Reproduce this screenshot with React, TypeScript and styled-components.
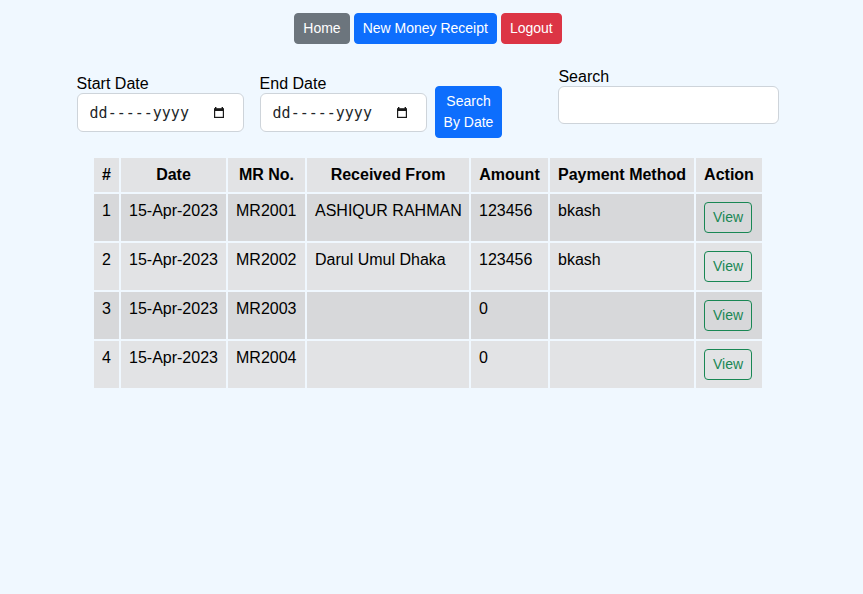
import React from "react";
import styled, { createGlobalStyle } from "styled-components";

const GlobalStyle = createGlobalStyle`
  html, body {
    margin: 0;
    padding: 0;
    background: #f0f8ff;
    font-family: "Liberation Sans", Arial, sans-serif;
    font-size: 16px;
    line-height: 1.5;
    color: #212529;
  }
  * { box-sizing: border-box; }
`;

const Page = styled.div`
  width: 856px;
  padding-top: 13px;
`;

const Nav = styled.nav`
  display: flex;
  justify-content: center;
  gap: 4px;
`;

const Btn = styled.button<{ $variant: "secondary" | "primary" | "danger" }>`
  font-family: "Liberation Sans", Arial, sans-serif;
  font-size: 14px;
  line-height: 21px;
  padding: 4px 8px;
  border-radius: 4px;
  color: #fff;
  cursor: pointer;
  flex-shrink: 0;
  border: 1px solid
    ${(p) =>
      p.$variant === "secondary" ? "#6c757d" : p.$variant === "primary" ? "#0d6efd" : "#dc3545"};
  background: ${(p) =>
    p.$variant === "secondary" ? "#6c757d" : p.$variant === "primary" ? "#0d6efd" : "#dc3545"};
`;

const FilterRow = styled.div`
  margin-top: 18px;
  display: flex;
  justify-content: center;
  align-items: flex-start;
`;

const Field = styled.div<{ $top: number; $gapRight: number }>`
  display: flex;
  flex-direction: column;
  flex-shrink: 0;
  margin-top: ${(p) => p.$top}px;
  margin-right: ${(p) => p.$gapRight}px;
`;

const Label = styled.label`
  font-size: 16px;
  line-height: 18px;
  padding-top: 6px;
  color: #000;
`;

const DateBox = styled.div`
  position: relative;
  width: 167px;
  height: 39px;
`;

const DateInput = styled.input`
  width: 100%;
  height: 100%;
  padding: 6px 12px;
  border: 1px solid #ced4da;
  border-radius: 6px;
  background: #fff;
  font-family: "DejaVu Sans Mono", monospace;
  font-size: 15px;
  color: #212529;
  &::placeholder {
    color: #212529;
    opacity: 1;
  }
`;

const CalendarIcon = styled.svg`
  position: absolute;
  left: 137px;
  top: 14px;
  pointer-events: none;
`;

const TextInput = styled.input`
  width: 221px;
  height: 38px;
  padding: 6px 12px;
  border: 1px solid #ced4da;
  border-radius: 6px;
  background: #fff;
  font-family: "Liberation Sans", Arial, sans-serif;
  font-size: 16px;
`;

const SearchBtn = styled(Btn)`
  margin-top: 24px;
  margin-right: 56px;
  text-align: center;
  white-space: nowrap;
`;

const Table = styled.table`
  width: 672px;
  margin: 18px auto 0;
  border-collapse: separate;
  border-spacing: 2px;
  table-layout: fixed;
  color: #000;
`;

const Th = styled.th`
  background: #e2e3e5;
  font-weight: bold;
  font-size: 16px;
  line-height: 18px;
  padding: 8px;
  text-align: center;
  white-space: nowrap;
`;

const Tr = styled.tr<{ $odd: boolean }>`
  background: ${(p) => (p.$odd ? "#d7d8da" : "#e2e3e5")};
`;

const Td = styled.td`
  font-size: 16px;
  line-height: 18px;
  padding: 8px;
  vertical-align: top;
  white-space: nowrap;
`;

const ViewBtn = styled.button`
  font-family: "Liberation Sans", Arial, sans-serif;
  font-size: 14px;
  line-height: 21px;
  padding: 4px 8px;
  border: 1px solid #198754;
  border-radius: 4px;
  background: transparent;
  color: #198754;
  cursor: pointer;
`;

const rows = [
  { id: 1, date: "15-Apr-2023", mr: "MR2001", from: "ASHIQUR RAHMAN", amount: "123456", method: "bkash" },
  { id: 2, date: "15-Apr-2023", mr: "MR2002", from: "Darul Umul Dhaka", amount: "123456", method: "bkash" },
  { id: 3, date: "15-Apr-2023", mr: "MR2003", from: "", amount: "0", method: "" },
  { id: 4, date: "15-Apr-2023", mr: "MR2004", from: "", amount: "0", method: "" },
];

const widths = [25, 105, 77, 162, 77, 144, 66];

function DateField({ id, label, gap }: { id: string; label: string; gap: number }) {
  return (
    <Field $top={7} $gapRight={gap}>
      <Label htmlFor={id}>{label}</Label>
      <DateBox>
        <DateInput id={id} type="text" placeholder="dd-----yyyy" />
        <CalendarIcon width="10" height="11" viewBox="0 0 10 11">
          <rect x="1" y="0" width="1.4" height="2" fill="#1a1a1a" />
          <rect x="7.6" y="0" width="1.4" height="2" fill="#1a1a1a" />
          <rect x="0" y="1.5" width="10" height="2.5" fill="#1a1a1a" />
          <rect x="0.6" y="2" width="8.8" height="8.4" fill="none" stroke="#1a1a1a" strokeWidth="1.2" />
        </CalendarIcon>
      </DateBox>
    </Field>
  );
}

export default function App() {
  return (
    <Page>
      <GlobalStyle />
      <Nav>
        <Btn $variant="secondary">Home</Btn>
        <Btn $variant="primary">New Money Receipt</Btn>
        <Btn $variant="danger">Logout</Btn>
      </Nav>
      <FilterRow>
        <DateField id="start" label="Start Date" gap={16} />
        <DateField id="end" label="End Date" gap={8} />
        <SearchBtn $variant="primary">
          Search
          <br />
          By Date
        </SearchBtn>
        <Field $top={0} $gapRight={0}>
          <Label htmlFor="search">Search</Label>
          <TextInput id="search" type="text" />
        </Field>
      </FilterRow>
      <Table>
        <colgroup>
          {widths.map((w, i) => (
            <col key={i} style={{ width: w }} />
          ))}
        </colgroup>
        <thead>
          <tr>
            <Th>#</Th>
            <Th>Date</Th>
            <Th>MR No.</Th>
            <Th>Received From</Th>
            <Th>Amount</Th>
            <Th>Payment Method</Th>
            <Th>Action</Th>
          </tr>
        </thead>
        <tbody>
          {rows.map((r, i) => (
            <Tr key={r.id} $odd={i % 2 === 0}>
              <Td>{r.id}</Td>
              <Td>{r.date}</Td>
              <Td>{r.mr}</Td>
              <Td>{r.from}</Td>
              <Td>{r.amount}</Td>
              <Td>{r.method}</Td>
              <Td>
                <ViewBtn>View</ViewBtn>
              </Td>
            </Tr>
          ))}
        </tbody>
      </Table>
    </Page>
  );
}
